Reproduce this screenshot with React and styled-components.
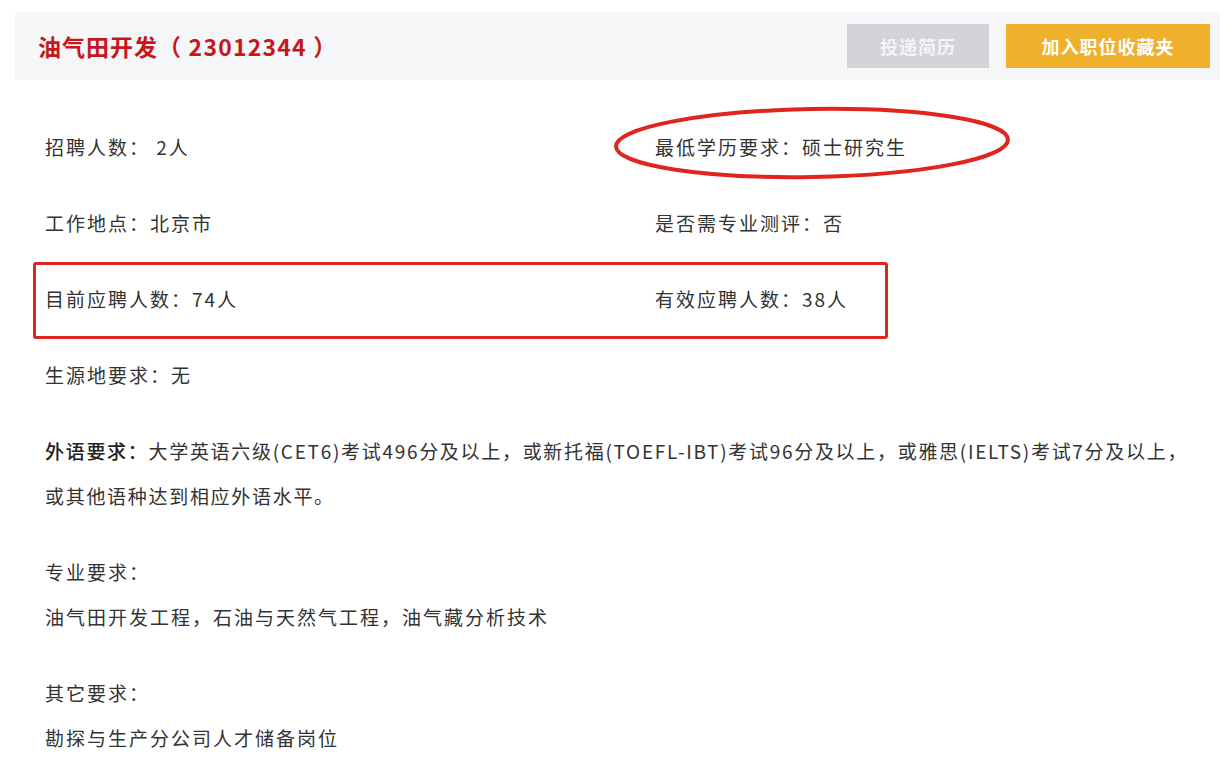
import styled, { createGlobalStyle } from "styled-components";

const GlobalStyle = createGlobalStyle`
  body {
    margin: 0;
    background: #ffffff;
    font-family: "Noto Sans CJK SC", "Noto Sans", sans-serif;
    color: #333;
  }
`;

const basicInfo = [
  ["招聘人数：", " 2人"],
  ["最低学历要求：", "硕士研究生"],
  ["工作地点：", "北京市"],
  ["是否需专业测评：", "否"],
  ["目前应聘人数：", "74人"],
  ["有效应聘人数：", "38人"],
  ["生源地要求：", "无"],
];

const App = () => {
  return (
    <>
      <GlobalStyle />
      <Card>
        <Header>
          <Title>
            油气田开发<Code>（ 23012344 ）</Code>
          </Title>
          <Actions>
            <GreyButton>投递简历</GreyButton>
            <YellowButton>加入职位收藏夹</YellowButton>
          </Actions>
        </Header>
        <Body>
          <InfoGrid>
            {basicInfo.map(([label, value]) => (
              <Item key={label}>
                {label}
                {value}
              </Item>
            ))}
          </InfoGrid>
          <Section $tight>
            <Strong>外语要求：</Strong>
            大学英语六级(CET6)考试496分及以上，或新托福(TOEFL-IBT)考试96分及以上，或雅思(IELTS)考试7分及以上，或其他语种达到相应外语水平。
          </Section>
          <Section>
            专业要求：
            <br />
            油气田开发工程，石油与天然气工程，油气藏分析技术
          </Section>
          <Section>
            其它要求：
            <br />
            勘探与生产分公司人才储备岗位
          </Section>
        </Body>
        <RectMark />
        <EllipseMark viewBox="0 0 400 76">
          <ellipse
            cx="200"
            cy="38"
            rx="196"
            ry="34"
            fill="none"
            stroke="#e0241e"
            strokeWidth="4"
          />
        </EllipseMark>
      </Card>
    </>
  );
};

const Card = styled.div`
  position: relative;
  width: 1205px;
  margin: 12px 0 0 15px;
`;

const Header = styled.div`
  height: 68px;
  background: #f5f6f8;
  display: flex;
  align-items: center;
  justify-content: space-between;
  padding: 0 10px 0 23px;
`;

const Title = styled.h1`
  margin: 0;
  font-size: 23px;
  font-weight: 700;
  letter-spacing: 1px;
  color: #c9161d;
`;

const Code = styled.span`
  white-space: pre;
  letter-spacing: 1.2px;
`;

const Actions = styled.div`
  display: flex;
  gap: 17px;
`;

const Button = styled.button`
  height: 44px;
  border: none;
  color: #fff;
  font-family: inherit;
  font-size: 18px;
  font-weight: 700;
  letter-spacing: 1px;
`;

const GreyButton = styled(Button)`
  width: 142px;
  background: #d3d4d8;
  color: #f4f4f6;
`;

const YellowButton = styled(Button)`
  width: 204px;
  background: #efb02c;
`;

const Body = styled.div`
  padding: 44px 0 0 30px;
  font-size: 19px;
  letter-spacing: 2px;
  line-height: 45px;
  display: flex;
  flex-direction: column;
  gap: 31px;
`;

const InfoGrid = styled.div`
  display: grid;
  grid-template-columns: 610px 1fr;
  row-gap: 31px;
`;

const Item = styled.div`
  white-space: pre;
`;

const Section = styled.div`
  padding-right: 15px;
  letter-spacing: ${(p) => (p.$tight ? "1.7px" : "2px")};
`;

const Strong = styled.span`
  color: #222;
  font-weight: 500;
`;

const RectMark = styled.div`
  position: absolute;
  left: 18px;
  top: 250px;
  width: 855px;
  height: 77px;
  box-sizing: border-box;
  border: 3px solid #e0241e;
  border-radius: 3px;
`;

const EllipseMark = styled.svg`
  position: absolute;
  left: 597px;
  top: 93px;
  width: 400px;
  height: 76px;
  transform: rotate(-1deg);
`;

export default App;
